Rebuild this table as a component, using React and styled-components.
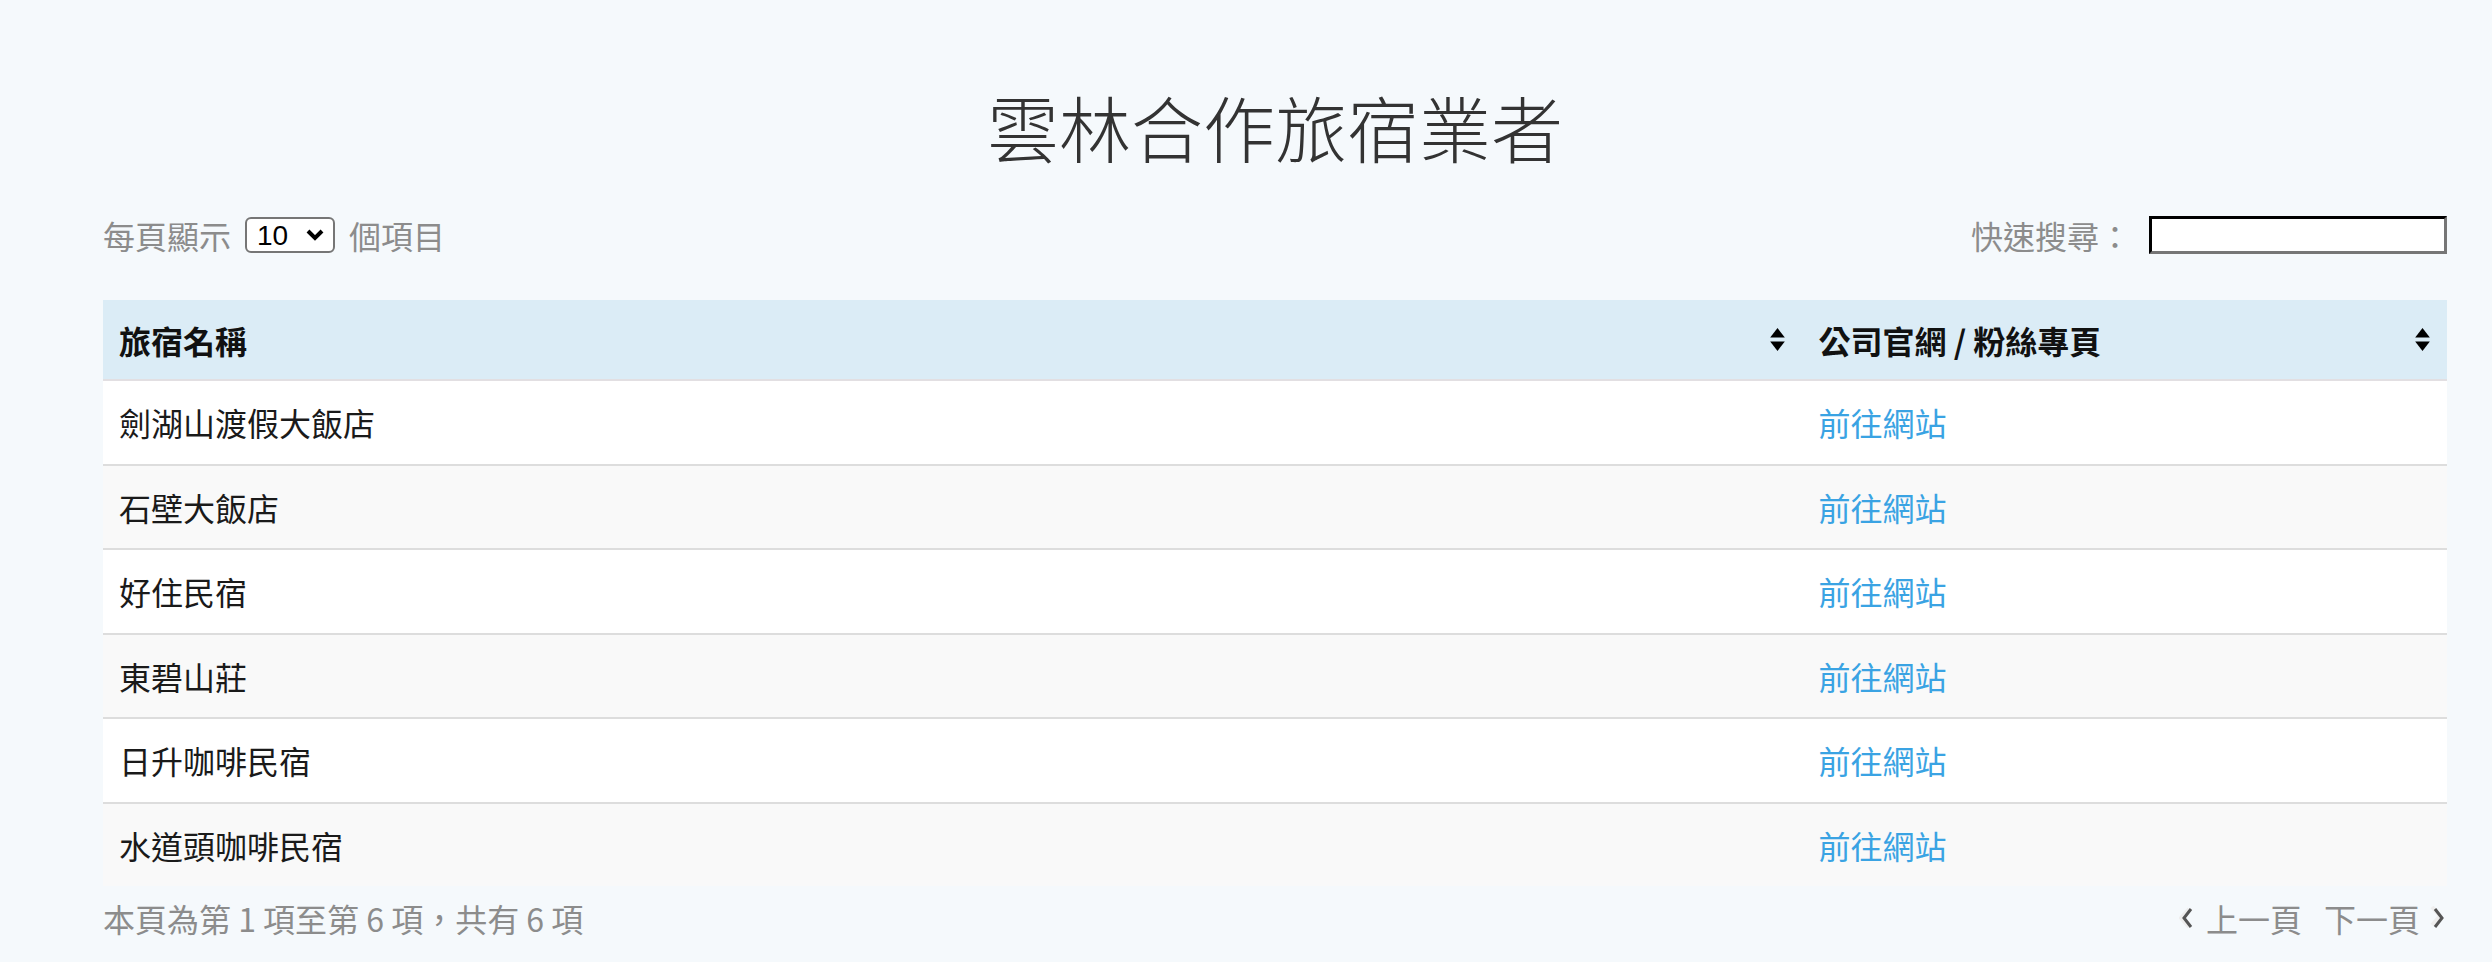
import React, { useState } from 'react';
import styled, { createGlobalStyle } from 'styled-components';

const GlobalStyle = createGlobalStyle`
  body {
    margin: 0;
    background: #f5f9fc;
    font-family: "Noto Sans CJK TC", "Noto Sans", sans-serif;
  }
`;

const Page = styled.div`
  padding: 82px 45px 40px 103px;
`;

const Title = styled.h1`
  margin: 0;
  text-align: center;
  font-size: 72px;
  line-height: 87px;
  font-weight: 300;
  color: #333;
`;

const Controls = styled.div`
  margin-top: 46px;
  height: 40px;
  display: flex;
  align-items: center;
  justify-content: space-between;
  font-size: 32px;
  color: #8c8c8c;
`;

const Label = styled.label`
  display: flex;
  align-items: center;
  gap: 14px;
`;

const SelectWrap = styled.span`
  position: relative;
  display: inline-flex;
`;

const Select = styled.select`
  appearance: none;
  width: 90px;
  height: 36px;
  font-family: "Liberation Sans", Arial, sans-serif;
  font-size: 28px;
  color: #000;
  background: #fff;
  border: 2px solid #767676;
  border-radius: 6px;
  padding: 0 0 0 10px;
`;

const Caret = styled.svg`
  position: absolute;
  right: 10px;
  top: 11px;
  pointer-events: none;
`;

const SearchInput = styled.input`
  width: 298px;
  height: 38px;
  box-sizing: border-box;
  margin-left: 4px;
  background: #fff;
  border: 3px inset #767676;
  border-top-color: #222;
  border-left-color: #222;
`;

const Table = styled.table`
  margin-top: 45px;
  width: 100%;
  border-collapse: collapse;
  font-size: 32px;
`;

const Th = styled.th`
  height: 79px;
  padding: 0 16px;
  text-align: left;
  font-weight: 700;
  color: #111;
  background: #dbecf6;
  border-bottom: 2px solid #e2dfe2;
  width: ${p => p.$w || 'auto'};
`;

const ThInner = styled.div`
  display: flex;
  align-items: center;
  justify-content: space-between;
`;

const Row = styled.tr`
  background: ${p => (p.$odd ? '#f9f9f9' : '#fff')};
  &:not(:last-child) td {
    border-bottom: 2px solid #ddd;
  }
`;

const Td = styled.td`
  height: 82.5px;
  padding: 0 16px;
  color: #1a1a1a;
`;

const Link = styled.a`
  color: #3aa3e3;
  text-decoration: none;
`;

const Footer = styled.div`
  margin-top: 12px;
  height: 40px;
  display: flex;
  align-items: center;
  justify-content: space-between;
  font-size: 32px;
  color: #8c8c8c;
`;

const Pager = styled.div`
  display: flex;
  align-items: center;
  gap: 10px;
`;

const PageBtn = styled.span`
  display: flex;
  align-items: center;
  gap: 10px;
  margin-left: ${p => p.$gap || '0'};
`;

const SortIcon = () => (
  <svg width="17" height="23" viewBox="0 0 16 22">
    <path d="M8 0 L15 9 L1 9 Z" fill="#000" />
    <path d="M1 13 L15 13 L8 22 Z" fill="#000" />
  </svg>
);

const Chevron = ({ dir }) => (
  <svg width="17" height="24" viewBox="0 0 17 24">
    {dir === 'left' ? (
      <>
        <path d="M12 3 L4 12 L12 21" stroke="#eee" strokeWidth="4" fill="none" transform="translate(-2 0)" />
        <path d="M12 3 L5 12 L12 21" stroke="#555" strokeWidth="3" fill="none" />
      </>
    ) : (
      <>
        <path d="M4 3 L12 12 L4 21" stroke="#eee" strokeWidth="4" fill="none" transform="translate(-2 -2)" />
        <path d="M5 3 L12 12 L5 21" stroke="#555" strokeWidth="3" fill="none" />
      </>
    )}
  </svg>
);

const hotels = [
  '劍湖山渡假大飯店',
  '石壁大飯店',
  '好住民宿',
  '東碧山莊',
  '日升咖啡民宿',
  '水道頭咖啡民宿',
];

const App = () => {
  const [size, setSize] = useState('10');
  return (
    <Page>
      <GlobalStyle />
      <Title>雲林合作旅宿業者</Title>
      <Controls>
        <Label>
          每頁顯示
          <SelectWrap>
            <Select value={size} onChange={e => setSize(e.target.value)}>
              <option value="10">10</option>
              <option value="25">25</option>
              <option value="50">50</option>
            </Select>
            <Caret width="20" height="14" viewBox="0 0 20 14">
              <path d="M3 3 L10 10 L17 3" stroke="#000" strokeWidth="4" fill="none" />
            </Caret>
          </SelectWrap>
          個項目
        </Label>
        <Label>
          快速搜尋：
          <SearchInput type="text" />
        </Label>
      </Controls>
      <Table>
        <thead>
          <tr>
            <Th $w="72.5%">
              <ThInner>旅宿名稱<SortIcon /></ThInner>
            </Th>
            <Th>
              <ThInner>公司官網 / 粉絲專頁<SortIcon /></ThInner>
            </Th>
          </tr>
        </thead>
        <tbody>
          {hotels.map((name, i) => (
            <Row key={name} $odd={i % 2 === 1}>
              <Td>{name}</Td>
              <Td><Link href="#">前往網站</Link></Td>
            </Row>
          ))}
        </tbody>
      </Table>
      <Footer>
        <span>本頁為第 1 項至第 6 項，共有 6 項</span>
        <Pager>
          <PageBtn><Chevron dir="left" />上一頁</PageBtn>
          <PageBtn $gap="12px">下一頁<Chevron dir="right" /></PageBtn>
        </Pager>
      </Footer>
    </Page>
  );
};

export default App;
